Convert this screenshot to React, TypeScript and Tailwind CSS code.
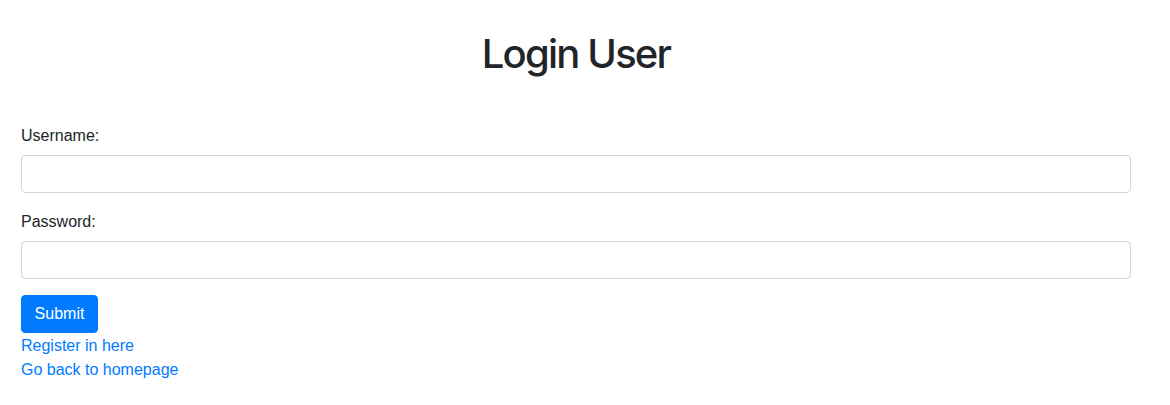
import React from "react";

export default function App() {
  return (
    <div
      className="w-[1170px] h-[405px] bg-white text-[#212529] text-[16px] leading-[24px]"
      style={{ fontFamily: '"Liberation Sans", Arial, sans-serif' }}
    >
      <div className="w-[1110px] ml-[21px] pt-[30px]">
        <h1
          className="text-center text-[40px] leading-[48px] font-medium tracking-[-1.8px] text-[#212529] m-0"
          style={{ fontFamily: 'Inter, "Liberation Sans", sans-serif' }}
        >
          Login User
        </h1>
        <form className="mt-[45px]" onSubmit={(e) => e.preventDefault()}>
          <div className="mb-[16px]">
            <label className="block pt-[1px] mb-[7px]">Username:</label>
            <input
              type="text"
              className="block w-full h-[38px] border border-[#ced4da] rounded-[4px] px-[12px] outline-none"
            />
          </div>
          <div className="mb-[16px]">
            <label className="block pt-[1px] mb-[7px]">Password:</label>
            <input
              type="password"
              className="block w-full h-[38px] border border-[#ced4da] rounded-[4px] px-[12px] outline-none"
            />
          </div>
          <button
            type="submit"
            className="block h-[38px] w-[77px] bg-[#007bff] text-white rounded-[4px] border border-[#007bff]"
          >
            Submit
          </button>
          <a href="#" className="block w-fit text-[#007bff] pt-[1px] -mb-[1px]">
            Register in here
          </a>
          <a href="#" className="block w-fit text-[#007bff] pt-[1px] -mb-[1px]">
            Go back to homepage
          </a>
        </form>
      </div>
    </div>
  );
}
